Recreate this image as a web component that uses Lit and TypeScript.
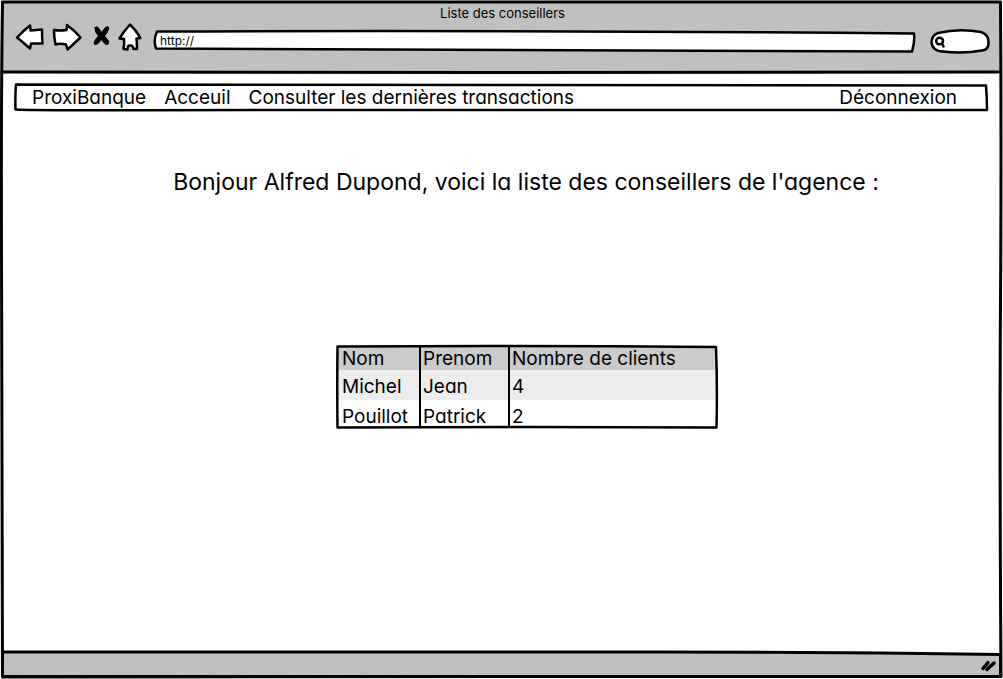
import { LitElement, html, svg, css } from "lit";
import { customElement, property, state } from "lit/decorators.js";

interface Adviser {
  nom: string;
  prenom: string;
  clients: number;
}

/** Hand-drawn outline that stretches over the box that holds it. */
@customElement("sketch-outline")
class SketchOutline extends LitElement {
  @property() box = "0 0 100 100";
  @property() path = "";

  static styles = css`
    :host {
      position: absolute;
      inset: 0;
      pointer-events: none;
    }
    .drawing {
      display: block;
      width: 100%;
      height: 100%;
      overflow: visible;
    }
    .line {
      fill: var(--sketch-fill, none);
      stroke: #000;
      stroke-width: var(--sketch-stroke, 3px);
      stroke-linejoin: round;
      stroke-linecap: round;
      vector-effect: non-scaling-stroke;
    }
  `;

  render() {
    return html`<svg class="drawing" viewBox=${this.box} preserveAspectRatio="none" aria-hidden="true">
      <path class="line" d=${this.path}></path>
    </svg>`;
  }
}

@customElement("app-root")
class AppRoot extends LitElement {
  @state() private advisers: Adviser[] = [
    { nom: "Michel", prenom: "Jean", clients: 4 },
    { nom: "Pouillot", prenom: "Patrick", clients: 2 },
  ];

  static styles = css`
    :host {
      display: block;
      font-family: Inter, "Open Sans", sans-serif;
      font-feature-settings: "cv11";
      font-size: 19px;
      line-height: 24px;
      color: #000;
    }
    * {
      box-sizing: border-box;
    }
    .window {
      position: relative;
      display: flex;
      flex-direction: column;
      min-height: 100vh;
      padding: 2px 3px 2px 2px;
    }
    .chrome {
      position: relative;
      background: #c0c0c0;
      padding: 2px 11px 12px 14px;
    }
    .title {
      margin: 0;
      font-size: 13px;
      line-height: 18px;
      font-weight: 400;
      text-align: center;
    }
    .toolbar {
      display: flex;
      align-items: center;
      gap: 8px;
    }
    .tool {
      display: block;
      padding: 0;
      border: 0;
      background: none;
    }
    .icon {
      display: block;
      overflow: visible;
      fill: #fff;
      stroke: #000;
      stroke-width: 2.5;
      stroke-linejoin: round;
      stroke-linecap: round;
    }
    .solid {
      fill: #000;
      stroke-width: 1;
    }
    .address {
      position: relative;
      flex: 1;
      margin: 0 8px 0 4px;
    }
    .filled {
      --sketch-fill: #fff;
      --sketch-stroke: 2.5px;
    }
    .thin {
      --sketch-stroke: 2.5px;
    }
    .field {
      position: relative;
      display: block;
      width: 100%;
      height: 22px;
      border: 0;
      padding: 0 6px 2px;
      background: none;
      font: inherit;
      font-size: 12px;
      line-height: 18px;
      color: #000;
      outline: 0;
    }
    .search {
      position: relative;
      width: 58px;
    }
    .rounded {
      height: 24px;
      padding-left: 18px;
    }
    .lens {
      position: absolute;
      left: 3px;
      top: 7px;
    }
    .page {
      flex: 1;
      display: flex;
      flex-direction: column;
      align-items: center;
      padding: 12px 12px 24px;
      background: #fff;
    }
    .nav {
      position: relative;
      align-self: stretch;
      display: flex;
      gap: 18px;
      padding: 2px 31px 1px 18px;
    }
    .link {
      color: inherit;
      text-decoration: none;
    }
    .last {
      margin-left: auto;
    }
    .greeting {
      margin: 55px 0 148px;
      padding-left: 50px;
      font-size: 23px;
      line-height: 32px;
      font-weight: 400;
    }
    .list {
      position: relative;
      width: 380px;
      max-width: 100%;
      margin-left: 52px;
    }
    .advisers {
      width: 100%;
      border-collapse: collapse;
      table-layout: fixed;
    }
    .name {
      width: 83px;
    }
    .first {
      width: 89px;
    }
    .cell {
      padding: 2px 0 0 2px;
      line-height: 22px;
      font-weight: 400;
      text-align: left;
      border-left: 2px solid #000;
    }
    .cell:first-child {
      border-left: 0;
      padding-left: 5px;
    }
    .head {
      background: #cbcbcb;
    }
    .row:nth-child(odd) {
      background: #ededed;
    }
    .row .cell {
      padding-top: 6px;
      padding-bottom: 2px;
    }
    .row:last-child .cell {
      padding-bottom: 0;
    }
    .status {
      position: relative;
      display: flex;
      justify-content: flex-end;
      padding: 5px 2px 4px;
      background: #fff;
    }
    .bar {
      --sketch-fill: #c0c0c0;
    }
    .grip {
      position: relative;
    }
  `;

  private icon(box: string, width: number, height: number, shape: unknown, cls = "icon") {
    return html`<svg class=${cls} width=${width} height=${height} viewBox=${box} aria-hidden="true">${shape}</svg>`;
  }

  render() {
    return html`
      <div class="window">
        <header class="chrome">
          <h1 class="title">Liste des conseillers</h1>
          <div class="toolbar">
            <button class="tool" aria-label="Page précédente">
              ${this.icon("16 22 28 38", 28, 38, svg`<path d="M17 37.5Q23 31 30 25.5L30.5 30.5L42 29.5Q42 37 42.5 43.5L31 43.5L30 48.5Q24 43 17 37.5Z"/>`)}
            </button>
            <button class="tool" aria-label="Page suivante">
              ${this.icon("52 22 30 38", 30, 38, svg`<path d="M54 30Q60 31 66.5 30L67 25Q74 30 80.5 37.5L67.5 49.5L66 44.5Q60 43 55.5 44.5Q54 38 54 30Z"/>`)}
            </button>
            <button class="tool" aria-label="Arrêter">
              ${this.icon("90 22 20 38", 20, 38, svg`<path d="M95 27.5Q97 25.5 99 28.5L101.5 32.5L105.5 27.5Q108 25.5 109 28Q108 32 104.5 36L108.5 41Q109.5 45 106 44.5Q103 42.5 101.5 39.5L98 43.5Q94.5 46 94 43Q95 39 98.5 36Q94.5 32 95 27.5Z"/>`, "icon solid")}
            </button>
            <button class="tool" aria-label="Accueil">
              ${this.icon("118 22 24 38", 24, 38, svg`<path d="M130 24.5Q136 30 140.5 38L136.5 38.5Q137 44 137 49L133.5 49Q133 45 130 45.5Q127.5 45 127.5 49.5L123.5 49Q124.5 44 124 39L119.5 38.5Q124 31 130 24.5Z"/>`)}
            </button>
            <div class="address">
              <sketch-outline
                class="filled"
                box="0 0 760 22"
                path="M3 1.5Q380 0 759 3.5Q760 12 757 21.5Q380 21 2 18.5Q-1 10 3 1.5Z"
              ></sketch-outline>
              <input class="field" type="text" aria-label="Adresse" value="http://" />
            </div>
            <div class="search">
              <sketch-outline
                class="filled"
                box="0 0 58 24"
                path="M7 4Q28 -1 50 3Q58 6 57.5 13Q58 21 51 21.5Q32 25 12 22.5Q1 22 0.5 13Q1 6 7 4Z"
              ></sketch-outline>
              <input class="field rounded" type="text" aria-label="Rechercher" />
              <svg class="icon lens" width="12" height="12" viewBox="0 0 12 12" aria-hidden="true">
                <path d="M8 7.5Q5 9 3 7.5Q1 4 4 2Q8 1 9 4.5Q9 6.5 8 7.5L9.5 10.5" />
              </svg>
            </div>
          </div>
          <sketch-outline box="0 0 1000 70" path="M0 70Q500 71 1000 70"></sketch-outline>
        </header>

        <main class="page">
          <nav class="nav" aria-label="Navigation">
            <a class="link" href="#">ProxiBanque</a>
            <a class="link" href="#">Acceuil</a>
            <a class="link" href="#">Consulter les dernières transactions</a>
            <a class="link last" href="#">Déconnexion</a>
            <sketch-outline
              class="thin"
              box="0 0 974 27"
              path="M2 0.5Q500 0 972 1.5Q973 15 973 26Q600 25.5 300 26T1.5 25.5Q1 12 2 0.5Z"
            ></sketch-outline>
          </nav>

          <h2 class="greeting">Bonjour Alfred Dupond, voici la liste des conseillers de l'agence :</h2>

          <div class="list">
            <table class="advisers">
              <thead class="head">
                <tr>
                  <th class="cell name" scope="col">Nom</th>
                  <th class="cell first" scope="col">Prenom</th>
                  <th class="cell" scope="col">Nombre de clients</th>
                </tr>
              </thead>
              <tbody>
                ${this.advisers.map(
                  (a) => html`<tr class="row">
                    <td class="cell">${a.nom}</td>
                    <td class="cell">${a.prenom}</td>
                    <td class="cell">${a.clients}</td>
                  </tr>`
                )}
              </tbody>
            </table>
            <sketch-outline
              class="thin"
              box="0 0 380 82"
              path="M0.5 0.5Q190 -0.5 379 1Q380.5 40 379.5 81.5Q190 80.500 0.5 81.5Q0 40 0.5 0.5Z"
            ></sketch-outline>
          </div>
        </main>

        <footer class="status">
          <sketch-outline
            class="bar"
            box="0 0 998 25"
            path="M0.5 0Q300 1 600 0Q800 -0.500 998.5 2.5L998.5 24.5L0.5 24.5Z"
          ></sketch-outline>
          ${this.icon("0 0 18 16", 18, 16, svg`<path d="M3 11.5L8 5.5M7 12.5L14 6" stroke-width="3.5"/>`, "icon grip")}
        </footer>

        <sketch-outline
          box="0 0 1003 679"
          path="M2.5 2Q500 2.5 1000.5 2Q1001.5 150 1000.5 300T1001 676.5Q700 675.5 500 676.5T2.5 677Q2 400 1.5 250T2.5 2Z"
        ></sketch-outline>
      </div>
    `;
  }
}
